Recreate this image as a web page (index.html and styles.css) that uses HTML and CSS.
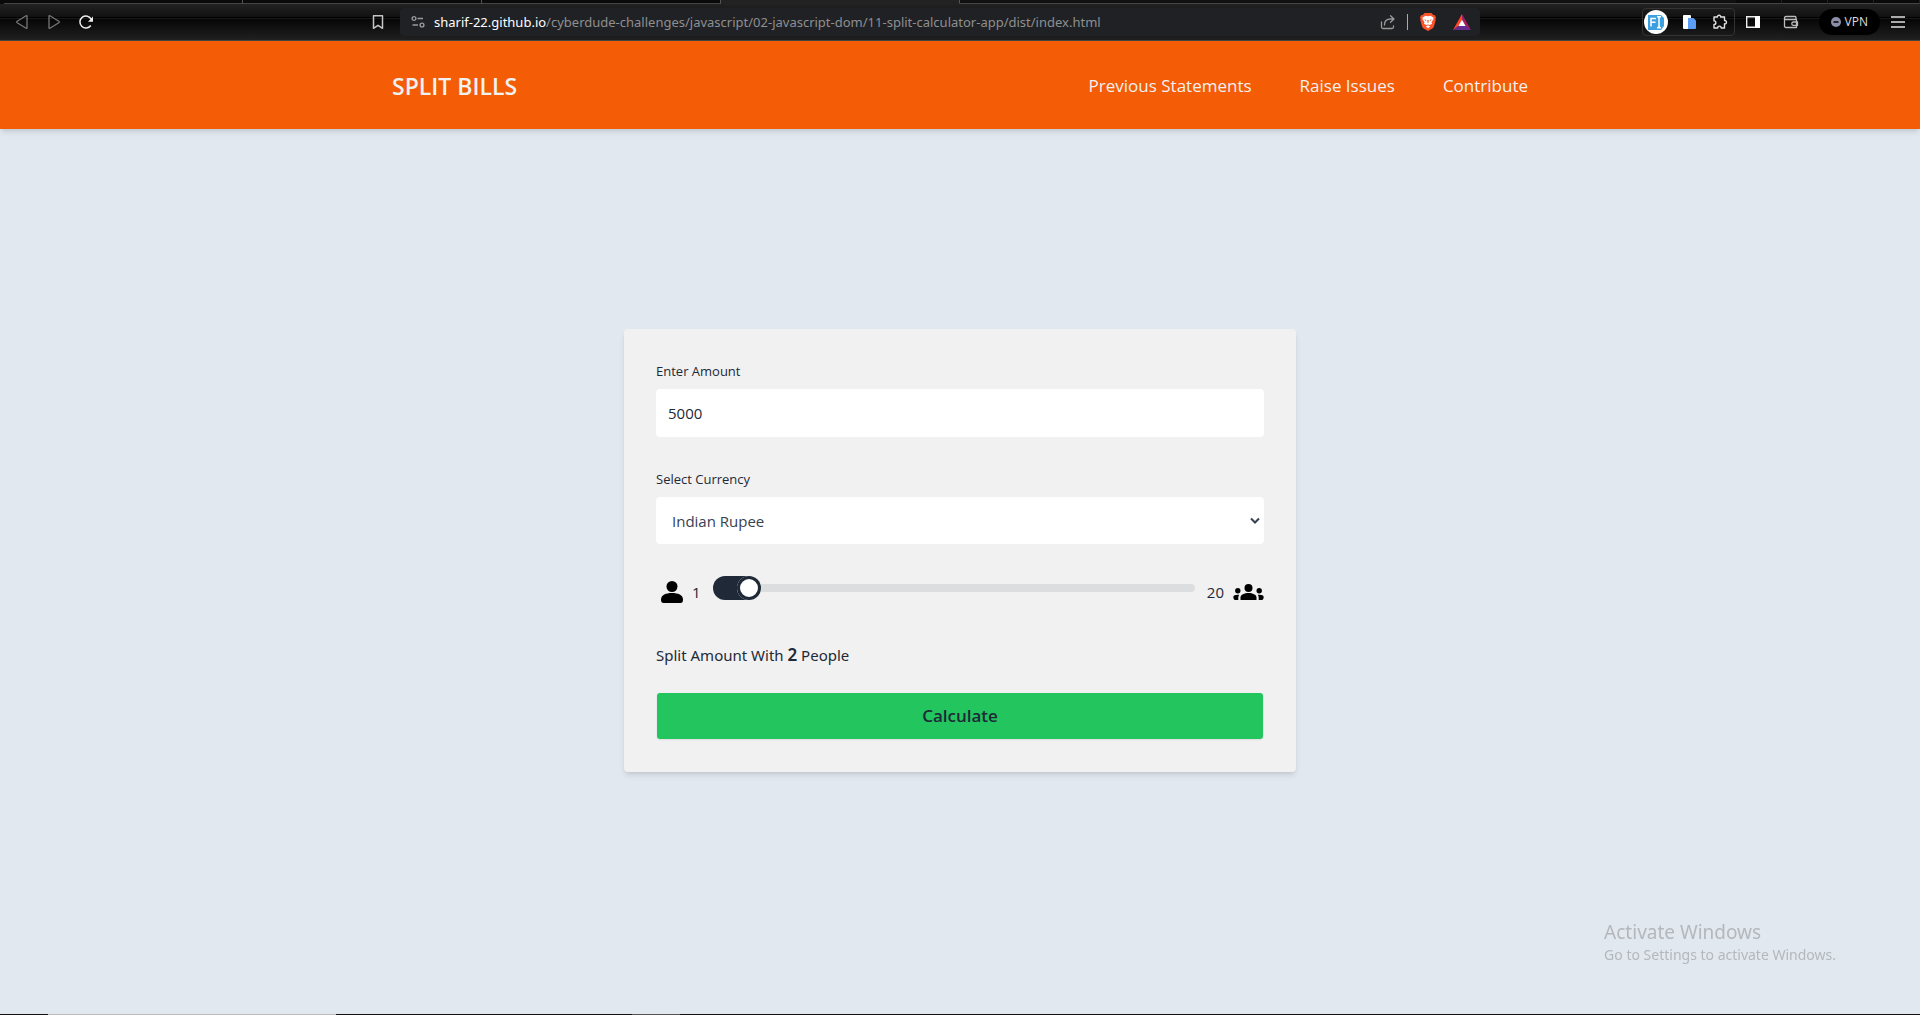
FILE: index.html
```html
<!DOCTYPE html>
<html lang="en">
<head>
<meta charset="utf-8">
<meta name="viewport" content="width=device-width, initial-scale=1">
<title>Split Bills</title>
<link rel="stylesheet" href="styles.css">
</head>
<body>
<div class="browser">
  <div class="tabs">
    <span class="tab"></span><span class="tab"></span><span class="tab tab-last"></span><span class="tab tab-active"></span>
    <span class="tab-rest"></span>
    <span class="win-btn"></span><span class="win-btn"></span><span class="win-btn"></span><span class="win-btn"></span>
  </div>
  <div class="toolbar">
    <div class="tools-left">
      <button class="tool" aria-label="Back"><svg width="16" height="16" viewBox="0 0 16 16" fill="none" stroke="#777" stroke-width="1.3" stroke-linejoin="round"><path d="M13 2.2v11.6q0 1-.9.4L3.200 8.800q-.9-.8 0-1.600l8.900-5.400q.9-.5.900.4Z"/></svg></button>
      <button class="tool" aria-label="Forward"><svg width="16" height="16" viewBox="0 0 16 16" fill="none" stroke="#777" stroke-width="1.3" stroke-linejoin="round"><path d="M3 2.200v11.600q0 1 .9.4l8.900-5.400q.9-.8 0-1.600L3.900 1.800Q3 1.300 3 2.200Z"/></svg></button>
      <button class="tool" aria-label="Reload"><svg width="16" height="16" viewBox="0 0 16 16" fill="none" stroke="#eee" stroke-width="1.500"><path d="M12.800 11.500A6 6 0 1 1 13.300 5.300"/><path d="M15 2.500v5.200h-5Z" fill="#eee" stroke="none"/></svg></button>
      <button class="tool bookmark" aria-label="Bookmark"><svg width="16" height="16" viewBox="0 0 16 16" fill="none" stroke="#c4c4c4" stroke-width="1.500" stroke-linejoin="round"><path d="M3.500 1.700h9v12.600L8 11.300l-4.500 3Z"/></svg></button>
    </div>
    <div class="address">
      <svg width="14" height="14" viewBox="0 0 14 14" fill="none" stroke="#999" stroke-width="1.400"><circle cx="3" cy="3.500" r="1.900"/><path d="M6.500 3.500H12M1.500 10H7"/><circle cx="11" cy="10" r="1.900"/></svg>
      <span class="url"><b>sharif-22.github.io</b>/cyberdude-challenges/javascript/02-javascript-dom/11-split-calculator-app/dist/index.html</span>
      <div class="address-end">
        <button class="tool" aria-label="Share"><svg width="16" height="16" viewBox="0 0 16 16" fill="none" stroke="#999" stroke-width="1.300" stroke-linecap="round" stroke-linejoin="round"><path d="M1.500 8v5q0 1.500 1.500 1.500h9q1.500 0 1.500-1.500v-1"/><path d="M4.500 11c0-4 2-6 6-6h2.500M10.500 1.700 14 5l-3.500 3.300"/></svg></button>
        <span class="rule"></span>
        <button class="tool" aria-label="Brave Shields"><svg width="18" height="20" viewBox="0 0 18 20"><path d="M5.500 1h7l1.800 1.900 1.700.3 1 2.600-.6 1.200.3 1-1.700 6.300q-.4 1.300-1.600 2.100L9 19l-4.400-2.600Q3.400 15.600 3 14.300L1.300 8l.3-1L1 5.800l1-2.600 1.700-.3Z" fill="#fb542b"/><path d="M9 4.200 11.500 3.700 14.300 5.500 14.500 7l-2 3.200.6 1.500-2.300 1.400L9 12.500l-1.800.6-2.300-1.400.6-1.500-2-3.200.2-1.500L6.500 3.700ZM9 13.200l2.200 1.300L9 16.300l-2.200-1.800Z" fill="#fff"/><path d="m5 7.200 2.500.7-.7 1ZM13 7.200l-2.500.7.7 1ZM8.300 8h1.400l-.3 3H8.600Z" fill="#fb542b"/></svg></button>
        <button class="tool" aria-label="Rewards"><svg width="18" height="16" viewBox="0 0 18 16"><path d="M9 0 0 16l9-6Z" fill="#ff4724"/><path d="M9 0 18 16 9 10Z" fill="#9e1f63"/><path d="M0 16h18L9 9Z" fill="#662d91"/><path d="m9 5.800 3.600 6.300H5.400Z" fill="#fff"/></svg></button>
      </div>
    </div>
    <div class="tools-right">
      <div class="extensions">
        <button class="tool" aria-label="Form filler"><svg width="24" height="24" viewBox="0 0 24 24"><circle cx="12" cy="12" r="12" fill="#fff"/><path d="M4 5h13l3 3v8l-3 4H4Z" fill="#3c9fe0"/><path d="M7 16.500V8.500h5M7 12.300h4.500M13 6.500q2 0 2 1.200 0-1.200 2-1.200M15 7.500v9M13 17.700q2 0 2-1.200 0 1.200 2 1.200" fill="none" stroke="#fff" stroke-width="1.500"/></svg></button>
        <button class="tool" aria-label="Page copier"><svg width="14" height="16" viewBox="0 0 14 16"><rect x="0" y="1" width="8" height="14" rx="1" fill="#fff"/><path d="M5 4h5.500L13 6.500V14q0 1-1 1H5Z" fill="#5b9cf5"/></svg></button>
        <button class="tool" aria-label="Extensions"><svg width="16" height="16" viewBox="0 0 16 16" fill="none" stroke="#e2e2e2" stroke-width="1.400" stroke-linejoin="round"><path d="M2 3h3.500C5 .6 9 .6 8.700 3H12.500v3.600c2.600-.4 2.600 3.600 0 3.200V14H9.200c0-2.500-3.500-2.500-3.500 0H2v-3.500c2.500 0 2.500-3.600 0-3.600Z"/></svg></button>
      </div>
      <button class="tool" aria-label="Sidebar"><svg width="14" height="14" viewBox="0 0 14 14"><path d="M.7 1.700h12.600v10.600H.7Z" fill="none" stroke="#eee" stroke-width="1.400"/><path d="M9 1h5v12H9Z" fill="#fff"/></svg></button>
      <button class="tool wallet" aria-label="Wallet"><svg width="16" height="16" viewBox="0 0 16 16" fill="none" stroke="#bbb" stroke-width="1.300" stroke-linejoin="round"><path d="M13 5V3.500q0-1-1-1H3Q1.500 2.500 1.500 4T3 5.500h10.500v8H3q-1.500 0-1.500-1.500V4M14.500 8h-4q-1.700 0-1.700 1.700t1.700 1.700h4Z"/></svg></button>
      <button class="vpn"><svg width="10" height="10" viewBox="0 0 10 10"><circle cx="5" cy="5" r="5" fill="#8b8ea6"/><path d="M2.500 5h5" stroke="#000" stroke-width="1.500"/></svg>VPN</button>
      <button class="tool" aria-label="Menu"><svg width="14" height="14" viewBox="0 0 14 14" stroke="#e0e0e0" stroke-width="1.300"><path d="M0 2h14M0 7h14M0 12h14"/></svg></button>
    </div>
  </div>
</div>

<header class="site-header">
  <div class="container">
    <a class="brand" href="#">SPLIT BILLS</a>
    <nav class="links">
      <a href="#">Previous Statements</a>
      <a href="#">Raise Issues</a>
      <a href="#">Contribute</a>
    </nav>
  </div>
</header>

<main class="main">
  <form class="card">
    <div class="field">
      <label for="amount">Enter Amount</label>
      <input class="control" id="amount" type="text" value="5000">
    </div>
    <div class="field">
      <label for="currency">Select Currency</label>
      <span class="select-wrap">
        <select class="control select" id="currency"><option>Indian Rupee</option></select>
        <svg class="chevron" width="10" height="8" viewBox="0 0 10 8" fill="none" stroke="#374151" stroke-width="2"><path d="m1 1.500 4 4 4-4"/></svg>
      </span>
    </div>
    <div class="people">
      <svg class="person" width="22" height="22" viewBox="0 0 22 22"><circle cx="11" cy="5.500" r="5.500"/><path d="M0 18.500C0 14 5 12 11 12s11 2 11 6.500q0 3.500-2.500 3.500h-17Q0 22 0 18.500Z"/></svg>
      <span class="min">1</span>
      <input class="range" type="range" min="1" max="20" value="2" aria-label="Number of people">
      <span class="max">20</span>
      <svg class="group" width="31" height="16" viewBox="0 0 31 16"><circle cx="15.500" cy="4" r="4"/><path d="M7.500 16v-2.500c0-3 4-4.500 8-4.500s8 1.500 8 4.500V16Z"/><circle cx="4.800" cy="6.800" r="2.700"/><circle cx="26.200" cy="6.800" r="2.700"/><path d="M.3 13c0-2 2.500-2.600 5.900-2.300-.7 1-.9 2-.9 3V16H1.800Q.3 15.500.3 13ZM30.700 13c0-2-2.500-2.600-5.900-2.300.7 1 .9 2 .9 3V16h3.500q1.500-.5 1.500-3Z"/></svg>
    </div>
    <p class="summary">Split Amount With <strong>2</strong> People</p>
    <button class="calculate" type="button">Calculate</button>
  </form>
</main>

<aside class="watermark">
  <div class="watermark-title">Activate Windows</div>
  <div>Go to Settings to activate Windows.</div>
</aside>
<div class="taskbar"></div>
</body>
</html>
```
FILE: styles.css
```css
* {
  box-sizing: border-box;
}

body {
  margin: 0;
  min-height: 100vh;
  display: flex;
  flex-direction: column;
  background: #e2e8f0;
  color: #1f2937;
  font-family: "Segoe UI", "Open Sans", sans-serif;
  font-size: 15px;
  line-height: 24px;
}

button,
input,
select {
  font: inherit;
  color: inherit;
}

a {
  color: inherit;
  text-decoration: none;
}

svg {
  display: block;
  flex: none;
}

/* Browser bar */

.tabs {
  display: flex;
  height: 4px;
  padding-left: 4px;
  background: #0a0a0a;
}

.tab {
  width: 239px;
  border-right: 1px solid #555;
  border-bottom: 1px solid #444;
}

.tab-active {
  background: #222;
  border-bottom-color: #222;
}

.tab-rest {
  flex: 1;
  border-bottom: 1px solid #444;
  background: #111;
}

.win-btn {
  width: 46px;
  border-right: 1px solid #222;
  border-bottom: 1px solid #444;
}

.toolbar {
  display: grid;
  grid-template-columns: 400fr 1080fr 440fr;
  align-items: center;
  height: 37px;
  border-bottom: 1px solid #444;
  background: linear-gradient(#222 0, #111 13px, #000 13px, #000 14px, #1a1a1a 14px, #1a1a1a 15px, #060606 15px, #202020 100%);
}

.tool {
  display: flex;
  padding: 0;
  border: 0;
  background: none;
}

.tools-left {
  display: flex;
  gap: 16px;
  padding: 0 14px;
}

.bookmark {
  margin-left: auto;
}

.address {
  display: flex;
  align-items: center;
  gap: 9px;
  height: 28px;
  padding: 0 9px 0 11px;
  border-radius: 4px;
  background: #202124;
}

.url {
  color: #8e8f91;
  font-family: "Segoe UI", "Noto Sans", sans-serif;
  font-size: 13px;
  line-height: 20px;
  white-space: nowrap;
}

.url b {
  color: #fff;
  font-weight: 400;
}

.address-end {
  display: flex;
  align-items: center;
  gap: 11px;
  margin-left: auto;
}

.address-end .tool:last-child {
  margin-left: 5px;
}

.rule {
  width: 1px;
  height: 16px;
  background: #aaa;
}

.tools-right {
  display: flex;
  align-items: center;
  justify-content: flex-end;
  gap: 11px;
  padding-right: 15px;
}

.extensions {
  display: flex;
  align-items: center;
  gap: 15px;
  height: 28px;
  padding: 0 6px 0 1px;
  border: 1px solid #333;
  border-radius: 4px;
}

.wallet {
  margin: 0 9px 0 12px;
}

.vpn {
  display: flex;
  align-items: center;
  gap: 4px;
  height: 26px;
  padding: 0 12px;
  border: 0;
  border-radius: 13px;
  background: #000;
  color: #ddd;
  font-size: 12px;
}

/* Site header */

.site-header {
  background: #f45c05;
  color: #f1f1f1;
  box-shadow: 0 4px 6px -1px rgba(0, 0, 0, .1), 0 2px 4px -2px rgba(0, 0, 0, .1);
}

.container {
  display: flex;
  align-items: center;
  justify-content: space-between;
  max-width: 1200px;
  margin: 0 auto;
  padding: 29px 32px 27px;
}

.brand {
  font-size: 23px;
  font-weight: 600;
  line-height: 32px;
}

.links {
  display: flex;
  gap: 48px;
  font-size: 17px;
}

/* Calculator */

.main {
  flex: 1;
  padding: 200px 16px 32px;
}

.card {
  max-width: 672px;
  margin: 0 auto;
  padding: 32px;
  border-radius: 4px;
  background: #f1f1f1;
  box-shadow: 0 4px 6px -1px rgba(0, 0, 0, .1), 0 2px 4px -2px rgba(0, 0, 0, .1);
}

.field {
  display: flex;
  flex-direction: column;
  gap: 8px;
  margin-bottom: 32px;
}

.field label {
  font-size: 13px;
  line-height: 20px;
}

.control {
  width: 100%;
  height: 48px;
  padding: 0 12px;
  border: 0;
  border-radius: 4px;
  background: #fff;
}

.select-wrap {
  display: grid;
  align-items: center;
}

.select {
  grid-area: 1 / 1;
  padding: 0 16px;
  height: 47px;
  appearance: none;
  color: #374151;
}

.chevron {
  grid-area: 1 / 1;
  justify-self: end;
  margin-right: 4px;
}

.people {
  display: flex;
  align-items: center;
  height: 32px;
}

.person {
  margin-left: 5px;
}

.min {
  margin: 0 12px 0 9px;
}

.range {
  flex: 1;
  align-self: flex-start;
  min-width: 0;
  height: 24px;
  margin: 0;
  overflow: hidden;
  border-radius: 12px;
  background: transparent;
  appearance: none;
}

.range::-webkit-slider-runnable-track {
  height: 8px;
  border-radius: 4px;
  background: #dcddde;
}

.range::-webkit-slider-thumb {
  width: 24px;
  height: 24px;
  margin-top: -8px;
  border-radius: 50%;
  background: #fff;
  appearance: none;
  box-shadow: 0 0 0 3px #1f2937 inset, -1610px 0 0 1600px #1f2937;
}

.max {
  margin: 0 9px 0 12px;
}

.summary {
  margin: 35px 0 26px;
  font-family: "Segoe UI", "Noto Sans", sans-serif;
}

.summary strong {
  font-size: 17px;
  font-weight: 600;
}

.calculate {
  display: block;
  width: calc(100% - 2px);
  height: 46px;
  margin: 0 1px 1px;
  border: 0;
  border-radius: 3px;
  background: #22c55e;
  font-size: 17px;
  font-weight: 600;
  box-shadow: 0 1px 2px rgba(0, 0, 0, .08);
}

/* Desktop overlay */

.watermark {
  position: fixed;
  right: 84px;
  bottom: 50px;
  color: #b4b7bb;
  font-family: "Segoe UI", "Noto Sans", sans-serif;
  font-size: 14px;
  line-height: 20px;
}

.watermark-title {
  font-size: 19px;
  line-height: 26px;
}

.taskbar {
  height: 1px;
  background: linear-gradient(90deg, #111 48px, #bbb 48px, #bbb 336px, #111 336px, #111 632px, #555 632px, #555 680px, #111 680px);
}
```
